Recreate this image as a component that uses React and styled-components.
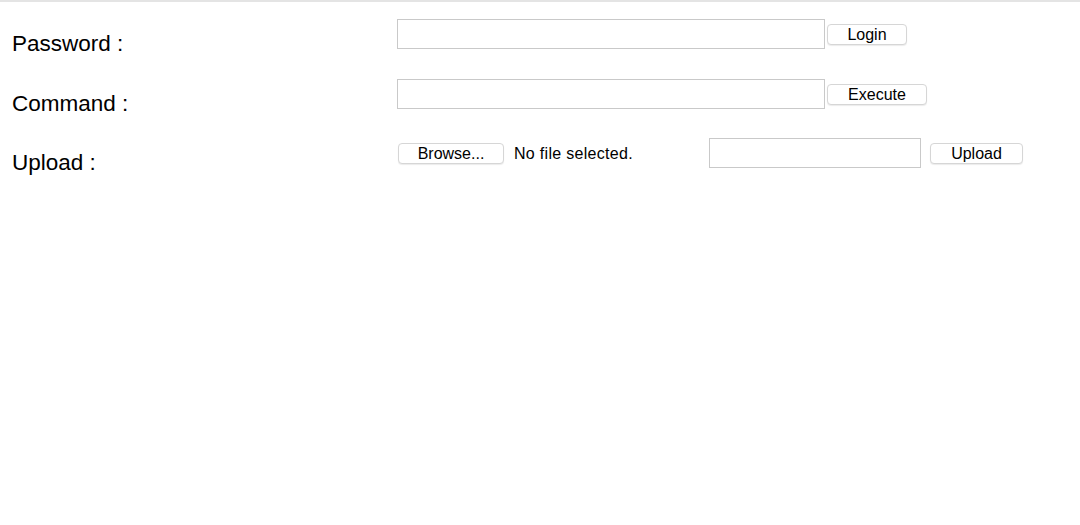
import React from 'react'
import styled, { createGlobalStyle } from 'styled-components'

const GlobalStyle = createGlobalStyle`
  html, body {
    margin: 0;
    padding: 0;
    background: #fff;
  }
  body {
    font-family: "Liberation Sans", Arial, Helvetica, sans-serif;
    color: #000;
  }
`

const Page = styled.div`
  min-height: 525px;
  border-top: 2px solid #e4e4e4;
  box-sizing: border-box;
`

const Form = styled.form`
  display: grid;
  grid-template-columns: 385px 1fr;
  grid-auto-rows: 59.5px;
  padding: 17px 0 0 12px;
  margin: 0;
`

const Label = styled.label`
  font-size: 22.5px;
  line-height: 30px;
  margin-top: 10px;
  white-space: nowrap;
`

const Controls = styled.div`
  display: flex;
  align-items: flex-start;
  gap: ${p => p.$gap || 2}px;
`

const TextBox = styled.input`
  box-sizing: border-box;
  width: ${p => p.$width}px;
  height: 30px;
  margin: 0;
  border: 1px solid #c9c9c9;
  border-radius: 0;
  padding: 0 6px;
  font: 16px "Liberation Sans", Arial, sans-serif;
  outline: none;
`

const Button = styled.button`
  box-sizing: border-box;
  width: ${p => p.$width}px;
  height: 21px;
  margin: 5px 0 0;
  padding: 0;
  background: #fff;
  border: 1px solid #d6d6d6;
  border-radius: 4px;
  box-shadow: 0 1px 1px rgba(0, 0, 0, 0.08);
  font: 16px "Liberation Sans", Arial, sans-serif;
  line-height: 19px;
  color: #000;
  cursor: pointer;
`

const FileBox = styled.div`
  display: flex;
  align-items: flex-start;
  gap: 10px;
  width: 303px;
  padding-left: 1px;
  box-sizing: border-box;
`

const FileName = styled.span`
  font-size: 16px;
  line-height: 19px;
  margin-top: 6px;
  white-space: nowrap;
  letter-spacing: 0.3px;
`

export default function App() {
  return (
    <Page>
      <GlobalStyle />
      <Form onSubmit={e => e.preventDefault()}>
        <Label>Password :</Label>
        <Controls>
          <TextBox type="password" $width={428} />
          <Button type="button" $width={80}>Login</Button>
        </Controls>

        <Label>Command :</Label>
        <Controls>
          <TextBox type="text" $width={428} />
          <Button type="button" $width={100}>Execute</Button>
        </Controls>

        <Label>Upload :</Label>
        <Controls $gap={9}>
          <FileBox>
            <Button type="button" $width={106}>Browse...</Button>
            <FileName>No file selected.</FileName>
          </FileBox>
          <TextBox type="text" $width={212} />
          <Button type="button" $width={93}>Upload</Button>
        </Controls>
      </Form>
    </Page>
  )
}
